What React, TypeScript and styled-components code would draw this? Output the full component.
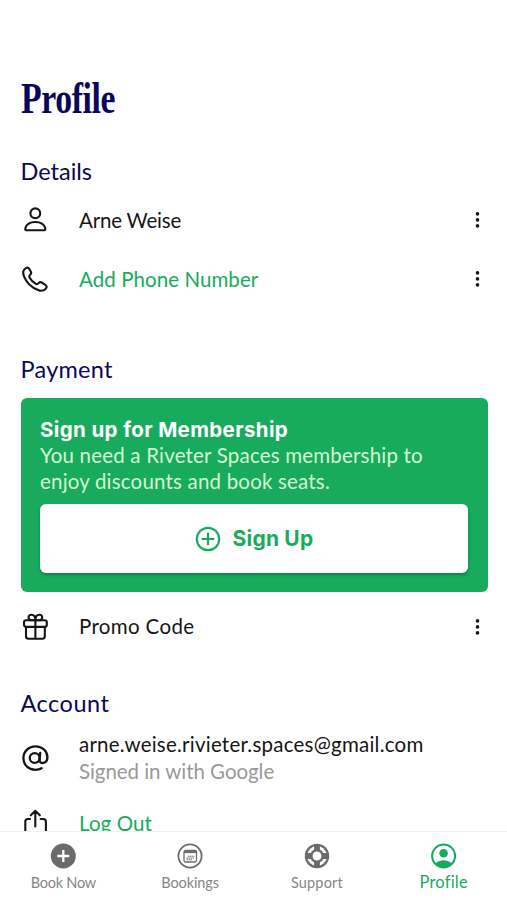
import React from "react";
import styled, { createGlobalStyle } from "styled-components";

const GREEN = "#18ab5e";
const NAVY = "#0b0758";

const GlobalStyle = createGlobalStyle`
  * { box-sizing: border-box; }
  body { margin: 0; background: #fff; font-family: Lato, "Open Sans", sans-serif; }
`;

const Screen = styled.div`
  width: 507px;
  height: 900px;
  display: flex;
  flex-direction: column;
  overflow: hidden;
  background: #fff;
`;

const Content = styled.main`
  height: 831px;
  flex: none;
  overflow: hidden;
  padding: 71px 20px 0 20.5px;
`;

const Title = styled.h1`
  margin: 0;
  height: 54px;
  font: 700 45px/54px "Liberation Serif", serif;
  color: ${NAVY};
  letter-spacing: -0.5px;
  white-space: nowrap;
  transform: scaleX(0.75);
  transform-origin: left;
`;

const Section = styled.section<{ $top: number }>`
  margin-top: ${(p) => p.$top}px;
`;

const Heading = styled.h2<{ $spacing: number }>`
  margin: 0;
  height: 32px;
  font-size: 23.5px;
  line-height: 31px;
  font-weight: 400;
  color: ${NAVY};
  letter-spacing: ${(p) => p.$spacing}px;
`;

const Row = styled.div<{ $height: number }>`
  height: ${(p) => p.$height}px;
  display: grid;
  grid-template-columns: 28px 1fr 20px;
  column-gap: 30.5px;
  align-items: center;
`;

const Label = styled.span<{ $tone?: string; $spacing: number }>`
  display: block;
  white-space: nowrap;
  padding-bottom: 1px;
  font-size: 20.5px;
  line-height: 26px;
  color: ${(p) => p.$tone ?? "#161616"};
  letter-spacing: ${(p) => p.$spacing}px;
`;

const Card = styled.div`
  width: 467px;
  height: 194px;
  margin-top: 12px;
  padding: 19px 19.5px;
  border-radius: 6px;
  background: ${GREEN};
`;

const CardTitle = styled.h3`
  margin: 0;
  font: 700 20.5px/26px Inter, sans-serif;
  letter-spacing: 0.38px;
  color: #fff;
  white-space: nowrap;
`;

const CardText = styled.p`
  margin: 0;
  font-size: 20.5px;
  line-height: 26px;
  letter-spacing: 0.19px;
  color: #d5f5d3;
  white-space: nowrap;
`;

const CardCopy = styled.div`
  height: 52px;
  margin-top: -1px;
`;

const SignUp = styled.button`
  width: 428px;
  height: 69px;
  margin-top: 10px;
  padding: 0;
  border: 0;
  border-radius: 6px;
  display: flex;
  align-items: center;
  justify-content: center;
  gap: 12px;
  background: #fff;
  color: ${GREEN};
  font: 700 21px/26px Inter, sans-serif;
  letter-spacing: 0.2px;
  box-shadow: 0 2px 3px rgba(0, 50, 20, 0.35);
`;

const Nav = styled.nav`
  height: 69px;
  flex: none;
  display: grid;
  grid-template-columns: repeat(4, 1fr);
  border-top: 1px solid #f0f0f0;
  background: #fff;
`;

const Tab = styled.a<{ $active?: boolean }>`
  display: flex;
  flex-direction: column;
  align-items: center;
  padding-top: 10.5px;
  color: ${(p) => (p.$active ? GREEN : "#6b6b6b")};
`;

const TabLabel = styled.span<{ $active?: boolean; $spacing: number }>`
  margin-top: ${(p) => (p.$active ? 3.5 : 4.5)}px;
  font-size: ${(p) => (p.$active ? 16.5 : 14.5)}px;
  line-height: 20px;
  color: ${(p) => (p.$active ? GREEN : "#858585")};
  letter-spacing: ${(p) => p.$spacing}px;
  white-space: nowrap;
`;

const Icon = styled.svg`
  display: block;
  overflow: visible;
`;

const Line = ({ children }: { children: React.ReactNode }) => (
  <Icon width="28" height="28" viewBox="0 0 28 28" fill="none" stroke="#161616" strokeWidth="2.1" strokeLinecap="round" strokeLinejoin="round">
    {children}
  </Icon>
);

const PersonIcon = () => (
  <Line>
    <circle cx="14.3" cy="7.3" r="4.9" />
    <path d="M6 24.300h16.600q2.200 0 1.700-2C23.200 18.200 19.200 16 14.300 16S5.400 18.200 4.300 22.300q-.5 2 1.700 2z" />
  </Line>
);

const PhoneIcon = () => (
  <Line>
    <path d="M5.300 2.900c1.300-.6 2.400 0 3.200 1.400l1.300 2.300c.7 1.300.4 2.300-.6 3.200-1 .8-1.300 1.600-.7 2.600 1.500 2.700 3.700 4.900 6.400 6.400 1.100.6 1.900.2 2.700-.7.9-1 1.900-1.300 3.100-.6l2.900 1.800c2.100 1.300 2.700 2.600 1.500 4-1.800 2.300-4.900 3-8 1.700C9.900 22.300 5.300 17.400 3 11.400 1.600 7.800 2.200 4.400 5.300 2.900z" />
  </Line>
);

const GiftIcon = () => (
  <Line>
    <rect x="3" y="7.200" width="22.800" height="6.700" rx="2.200" />
    <path d="M5 14v9.300q0 2.500 2.500 2.500h13.800q2.500 0 2.500-2.500V14M14.400 7.200v18.600M14.400 7.200H9.500C6.400 5.600 7.300 1.800 10.400 1.800c3 0 4 2.600 4 5.400zM14.400 7.200h4.900c3.100-1.600 2.200-5.400-.9-5.400-3 0-4 2.600-4 5.400z" />
  </Line>
);

const ShareIcon = () => (
  <Line>
    <path d="M14.300 17.500V1.800M9.800 6.300 14.300 1.800l4.500 4.500M9 10H7q-2.700 0-2.700 2.700v9q0 2.700 2.700 2.700h15.200q2.700 0 2.700-2.700v-9Q24.900 10 22.200 10h-2.500" />
  </Line>
);

const AtIcon = () => (
  <Line>
    <circle cx="13.700" cy="14" r="4.900" strokeWidth="2.300" />
    <path strokeWidth="2.300" d="M19.200 9 18.600 15.700c-.3 5.200 7.800 4.300 7.800-2.400C26.400 7.200 21.400 2.300 14.600 2.300 7.900 2.300 2.400 7.300 2.400 14.100c0 6.600 5 11.700 12 11.700 2.400 0 4.400-.5 6.200-1.600" />
  </Line>
);

const MoreIcon = () => (
  <Icon width="20" height="20" viewBox="0 0 20 20" fill="#161616">
    <circle cx="10.500" cy="3.900" r="1.800" />
    <circle cx="10.500" cy="9.900" r="1.800" />
    <circle cx="10.500" cy="15.900" r="1.800" />
  </Icon>
);

const TabIcon = ({ children }: { children: React.ReactNode }) => (
  <Icon width="26" height="26" viewBox="0 0 26 26" fill="none" stroke="currentColor" strokeWidth="2">
    {children}
  </Icon>
);

export default function App() {
  return (
    <>
      <GlobalStyle />
      <Screen>
        <Content>
          <Title>Profile</Title>
          <Section $top={31}>
            <Heading $spacing={0}>Details</Heading>
            <Row $height={64}>
              <PersonIcon />
              <Label $spacing={-0.2}>Arne Weise</Label>
              <MoreIcon />
            </Row>
            <Row $height={54}>
              <PhoneIcon />
              <Label $tone={GREEN} $spacing={0.07}>Add Phone Number</Label>
              <MoreIcon />
            </Row>
          </Section>
          <Section $top={48}>
            <Heading $spacing={0.25}>Payment</Heading>
            <Card>
              <CardTitle>Sign up for Membership</CardTitle>
              <CardCopy>
                <CardText>You need a Riveter Spaces membership to</CardText>
                <CardText>enjoy discounts and book seats.</CardText>
              </CardCopy>
              <SignUp>
                <Icon width="26" height="26" viewBox="0 0 26 26" fill="none" stroke="currentColor" strokeWidth="2.200" strokeLinecap="round">
                  <circle cx="13" cy="13" r="11.200" />
                  <path d="M13 7.500v11M7.500 13h11" />
                </Icon>
                Sign Up
              </SignUp>
            </Card>
            <Row $height={69}>
              <GiftIcon />
              <Label $spacing={0.35}>Promo Code</Label>
              <MoreIcon />
            </Row>
          </Section>
          <Section $top={27}>
            <Heading $spacing={0.5}>Account</Heading>
            <Row $height={76}>
              <AtIcon />
              <div>
                <Label $spacing={0.23}>arne.weise.rivieter.spaces@gmail.com</Label>
                <Label $tone="#999999" $spacing={-0.05}>Signed in with Google</Label>
              </div>
            </Row>
            <Row $height={54}>
              <ShareIcon />
              <Label $tone={GREEN} $spacing={0.1}>Log Out</Label>
            </Row>
          </Section>
        </Content>
        <Nav>
          <Tab>
            <TabIcon>
              <circle cx="13.300" cy="13" r="12.500" fill="currentColor" stroke="none" />
              <path d="M13.300 7v12M7.300 13h12" stroke="#fff" strokeWidth="2.300" />
            </TabIcon>
            <TabLabel $spacing={-0.25}>Book Now</TabLabel>
          </Tab>
          <Tab>
            <TabIcon>
              <circle cx="13" cy="13" r="11.600" strokeWidth="1.800" />
              <rect x="7" y="7.500" width="12.500" height="11.500" rx="1.500" strokeWidth="1.300" />
              <path d="M7 9h12.500" strokeWidth="2.200" />
              <path d="M11 13.200h6.500M9.500 15h8M9.500 16.800h5.500" strokeWidth="1.100" strokeDasharray="1.500 .5" />
            </TabIcon>
            <TabLabel $spacing={-0.1}>Bookings</TabLabel>
          </Tab>
          <Tab>
            <TabIcon>
              <circle cx="13" cy="13" r="11.100" strokeWidth="2.300" />
              <circle cx="13" cy="13" r="5.700" strokeWidth="2.400" />
              <path d="M13 1.500v6M13 18.500v6M1.500 13h6M18.500 13h6" strokeWidth="5.800" />
            </TabIcon>
            <TabLabel $spacing={0.15}>Support</TabLabel>
          </Tab>
          <Tab $active>
            <TabIcon>
              <circle cx="12.600" cy="13" r="11.500" />
              <circle cx="12.600" cy="10.300" r="4.300" fill="currentColor" stroke="none" />
              <path d="M4.100 20.800c4-4.800 13-4.800 17 0-4.200 5.200-12.800 5.200-17 0z" fill="currentColor" stroke="none" />
            </TabIcon>
            <TabLabel $active $spacing={0.2}>Profile</TabLabel>
          </Tab>
        </Nav>
      </Screen>
    </>
  );
}
